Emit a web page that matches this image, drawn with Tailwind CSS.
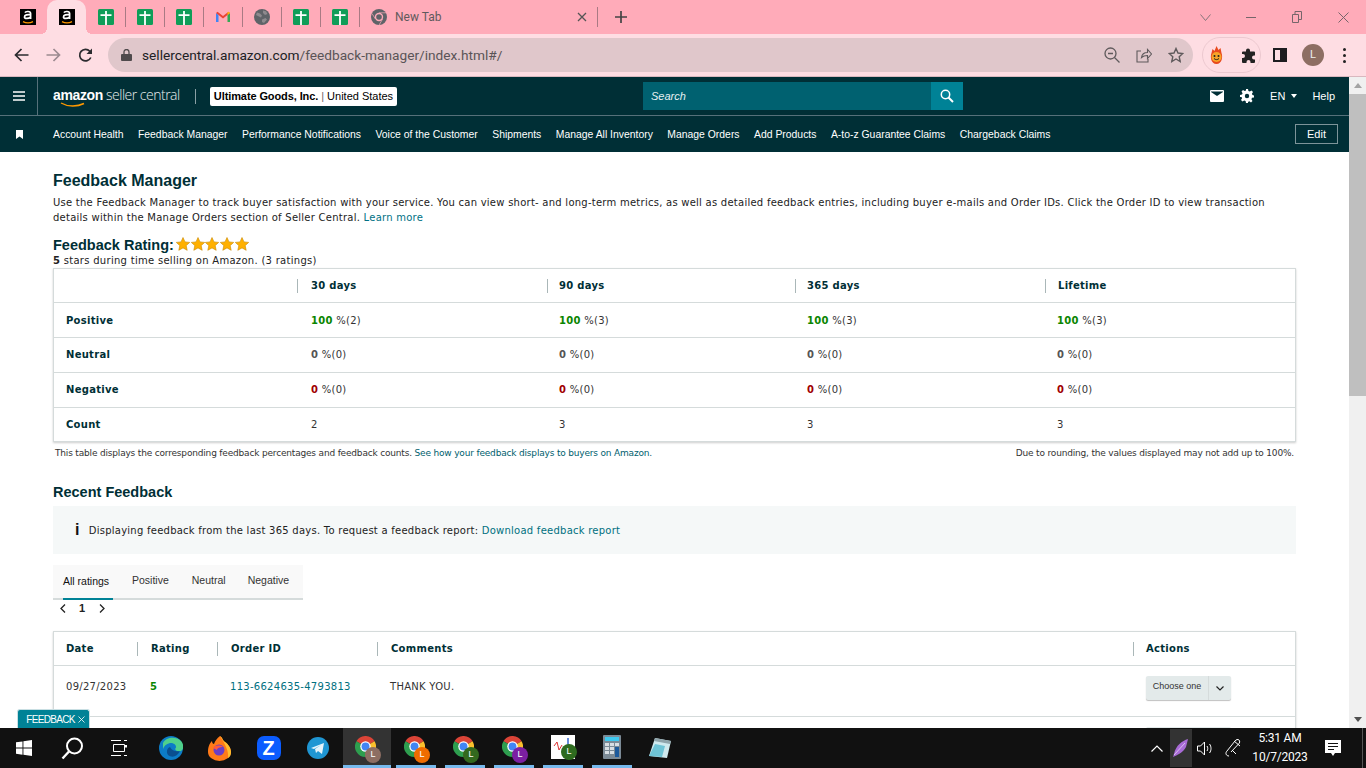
<!DOCTYPE html>
<html lang="en">

<head>
  <meta charset="UTF-8">
  <meta name="viewport" content="width=device-width, initial-scale=1.0">
  <title>Feedback Manager</title>
  <script src="https://cdn.jsdelivr.net/npm/@tailwindcss/browser@4"></script>
</head>

<body class="h-screen w-[1366px] overflow-hidden flex flex-col bg-white font-['Liberation_Sans',sans-serif] text-[#0f1111]">

  <!-- shared icons -->
  <svg class="hidden">
    <symbol id="sheet" viewBox="0 0 16 16">
      <rect width="16" height="16" rx="1.5" fill="#0f9d58" />
      <path d="M7.100 2h1.800v14H7.100zM2.500 5.300h11v1.700h-11z" fill="#fff" />
    </symbol>
    <symbol id="amz" viewBox="0 0 16 16">
      <rect width="16" height="16" fill="#000" />
      <path d="M3 12.600c3 1.600 7 1.600 10 0" stroke="#f90" stroke-width="1.200" fill="none" />
      <path d="M5 3.600c.6-1.400 5.600-1.800 5.600 1v5.400M10.500 5.700c-3-.3-6 .2-6 2.200 0 2 3.800 2 6 .2" stroke="#fff" stroke-width="1.700" fill="none" />
    </symbol>
    <symbol id="chrome" viewBox="0 0 24 24">
      <path d="M12 12L1.600 6A12 12 0 0 1 22.400 6z" fill="#db4437" />
      <path d="M12 12L22.400 6A12 12 0 0 1 12 24z" fill="#fbc02d" />
      <path d="M12 12L12 24A12 12 0 0 1 1.600 6z" fill="#2e9e4f" />
      <circle cx="12" cy="12" r="6" fill="#fff" />
      <circle cx="12" cy="12" r="4.500" fill="#4285f4" />
    </symbol>
  </svg>

  <!-- tab strip -->
  <div class="h-[34px] shrink-0 bg-[#ffabb9] flex items-stretch pl-[8px]">
    <div class="w-[39px] flex items-center justify-center"><svg class="w-4 h-4"><use href="#amz" /></svg></div>
    <div class="w-[39px] relative flex items-center justify-center bg-[#fedde3] rounded-t-[10px]">
      <svg class="w-4 h-4"><use href="#amz" /></svg>
      <span class="absolute -left-[6px] bottom-0 w-[6px] h-[6px] bg-[radial-gradient(circle_at_0_0,transparent_6px,#fedde3_6px)]"></span>
      <span class="absolute -right-[6px] bottom-0 w-[6px] h-[6px] bg-[radial-gradient(circle_at_100%_0,transparent_6px,#fedde3_6px)]"></span>
    </div>
    <div class="w-[39px] flex items-center justify-center"><svg class="w-4 h-4"><use href="#sheet" /></svg><span class="w-px h-[20px] bg-[#a97a84] ml-[11px] -mr-[12px]"></span></div>
    <div class="w-[39px] flex items-center justify-center"><svg class="w-4 h-4"><use href="#sheet" /></svg><span class="w-px h-[20px] bg-[#a97a84] ml-[11px] -mr-[12px]"></span></div>
    <div class="w-[39px] flex items-center justify-center"><svg class="w-4 h-4"><use href="#sheet" /></svg><span class="w-px h-[20px] bg-[#a97a84] ml-[11px] -mr-[12px]"></span></div>
    <div class="w-[39px] flex items-center justify-center">
      <svg class="w-4 h-4" viewBox="0 0 16 16">
        <path d="M1 13V4l2.500 2v7z" fill="#4285f4" />
        <path d="M15 13V4l-2.500 2v7z" fill="#34a853" />
        <path d="M1 4l1.500-1.200L8 7l5.500-4.200L15 4 8 9.500z" fill="#ea4335" />
        <path d="M12.500 6L15 4 13.500 2.800 12.500 3.500z" fill="#fbbc04" />
      </svg>
      <span class="w-px h-[20px] bg-[#a97a84] ml-[11px] -mr-[12px]"></span>
    </div>
    <div class="w-[39px] flex items-center justify-center">
      <svg class="w-4 h-4" viewBox="0 0 16 16">
        <circle cx="8" cy="8" r="8" fill="#5f6368" />
        <path d="M3 3.500l3 1 2 2-1 2-2-1-3-1.500zM9 1.500l3 .8 1.500 2.700-2.500 1-2-2zM8 10.500l3.500-1.500 1.500 1.500-3 3.500-2-1z" fill="#8e8a8e" />
      </svg>
      <span class="w-px h-[20px] bg-[#a97a84] ml-[11px] -mr-[12px]"></span>
    </div>
    <div class="w-[39px] flex items-center justify-center"><svg class="w-4 h-4"><use href="#sheet" /></svg><span class="w-px h-[20px] bg-[#a97a84] ml-[11px] -mr-[12px]"></span></div>
    <div class="w-[39px] flex items-center justify-center"><svg class="w-4 h-4"><use href="#sheet" /></svg><span class="w-px h-[20px] bg-[#a97a84] ml-[11px] -mr-[12px]"></span></div>
    <!-- new tab -->
    <div class="w-[239px] flex items-center pl-[12px]">
      <svg class="w-4 h-4 shrink-0" viewBox="0 0 16 16">
        <circle cx="8" cy="8" r="8" fill="#5f6368" />
        <circle cx="8" cy="8" r="4.200" fill="#ffabb9" />
        <circle cx="8" cy="8" r="2.800" fill="#5f6368" />
        <path d="M8 3.800h7M4.400 10L1 4.500M11.600 10l-3.500 6" stroke="#ffabb9" stroke-width=".7" />
      </svg>
      <span class="ml-[8px] text-[12px] text-[#5f5a5c] font-['Roboto',sans-serif]">New Tab</span>
      <svg class="w-[10px] h-[10px] ml-auto mr-[10px]" viewBox="0 0 10 10"><path d="M1 1l8 8M9 1l-8 8" stroke="#555" stroke-width="1.300" /></svg>
      <span class="w-px h-[20px] bg-[#a97a84]"></span>
    </div>
    <div class="w-[46px] flex items-center justify-center">
      <svg class="w-3 h-3" viewBox="0 0 12 12"><path d="M6 0v12M0 6h12" stroke="#444" stroke-width="1.700" /></svg>
    </div>
    <!-- window controls -->
    <div class="ml-auto flex items-center text-[#76656a]">
      <div class="w-[46px] flex justify-center"><svg class="w-[11px] h-[7px]" viewBox="0 0 11 7"><path d="M.5.500l5 6 5-6" stroke="#86757a" fill="none" /></svg></div>
      <div class="w-[46px] flex justify-center"><svg class="w-[10px] h-px" viewBox="0 0 10 1"><path d="M0 .500h10" stroke="#76656a" /></svg></div>
      <div class="w-[46px] flex justify-center"><svg class="w-[10px] h-[12px]" viewBox="0 0 10 12"><path d="M.5 3.500h6v8h-6zM3 3.500v-3h6.500v8h-3" stroke="#76656a" fill="none" /></svg></div>
      <div class="w-[46px] flex justify-center"><svg class="w-[11px] h-[11px]" viewBox="0 0 11 11"><path d="M.5.500l10 10M10.500.500l-10 10" stroke="#76656a" /></svg></div>
    </div>
  </div>

  <!-- toolbar -->
  <div class="h-[43px] shrink-0 bg-[#fedde3] border-b border-[#d9b8bf] flex items-center">
    <div class="w-[108px] shrink-0 flex items-center pl-[14px] gap-[17px]">
      <svg class="w-[15px] h-[14px]" viewBox="0 0 15 14"><path d="M14.500 7H2M7.500 1L1.500 7l6 6" stroke="#2b2b2f" stroke-width="1.700" fill="none" /></svg>
      <svg class="w-[15px] h-[14px]" viewBox="0 0 15 14"><path d="M.5 7H13M7.500 1l6 6-6 6" stroke="#9c8a90" stroke-width="1.700" fill="none" /></svg>
      <svg class="w-[15px] h-[15px]" viewBox="0 0 15 15"><path d="M12.800 9.500A5.800 5.800 0 1 1 11.800 3.200L13.500 5" stroke="#2b2b2f" stroke-width="1.700" fill="none" /><path d="M14 .5V6H8.500z" fill="#2b2b2f" /></svg>
    </div>
    <div class="w-[1085px] h-[34px] shrink-0 rounded-full bg-[#e0c7cb] flex items-center pl-[13px]">
      <svg class="w-[11px] h-[12px]" viewBox="0 0 11 12"><rect y="5" width="11" height="7" rx="1" fill="#4f4a4c" /><path d="M3 5V3a2.500 2.500 0 0 1 5 0v2" stroke="#4f4a4c" stroke-width="1.300" fill="none" /></svg>
      <span class="ml-[10px] text-[13.700px] text-[#5a5457] font-['Roboto',sans-serif]"><span class="text-[#202124]">sellercentral.amazon.com</span>/feedback-manager/index.html#/</span>
      <div class="ml-auto flex items-center gap-[16px] pr-[9px]">
        <svg class="w-[16px] h-[16px]" viewBox="0 0 16 16"><circle cx="6.500" cy="6.500" r="5.500" stroke="#5f5a5c" stroke-width="1.300" fill="none" /><path d="M10.500 10.500L15.500 15.500M4 6.500h5" stroke="#5f5a5c" stroke-width="1.300" /></svg>
        <svg class="w-[16px] h-[16px]" viewBox="0 0 16 16"><path d="M5.500 10.500c.5-3.500 3-5 6-5V2.500l4 4.500-4 4.500V8.500c-2.500 0-4.500.5-6 2z" stroke="#5f5a5c" stroke-width="1.100" fill="none" /><path d="M5 4H1v11h11v-3" stroke="#5f5a5c" stroke-width="1.100" fill="none" /></svg>
        <svg class="w-[16px] h-[16px]" viewBox="0 0 16 16"><path d="M8 1.500l2 4.500 4.800.5-3.600 3.200 1 4.800L8 12l-4.200 2.500 1-4.800L1.200 6.500 6 6z" stroke="#5f5a5c" stroke-width="1.400" fill="none" /></svg>
      </div>
    </div>
    <div class="ml-[9px] w-[59px] h-[36px] rounded-full border border-[#ecc9d0] flex items-center pl-[6px] gap-[17px]">
      <svg class="w-[15px] h-[18px]" viewBox="0 0 15 18"><path d="M7.500 0l2 4 2-2 1 5c1.500 4 .5 11-5 11s-6.500-7-5-11l1-4 2 2z" fill="#e8491d" /><circle cx="7.500" cy="11" r="5" fill="#f7a428" /><circle cx="5.500" cy="10" r="1" fill="#222" /><circle cx="9.500" cy="10" r="1" fill="#222" /><path d="M5 12.500c1.500 1.500 3.500 1.500 5 0" stroke="#222" fill="none" /></svg>
      <svg class="w-[15px] h-[15px]" viewBox="0 0 15 15"><path d="M5 2.500a2 2 0 0 1 4 0V3.500h4a1 1 0 0 1 1 1v3h-1a2 2 0 0 0 0 4h1V14a1 1 0 0 1-1 1H9.500v-1a2 2 0 0 0-4 0v1H2a1 1 0 0 1-1-1V10h1a2 2 0 0 0 0-4H1V4.500a1 1 0 0 1 1-1h3z" fill="#222" /></svg>
    </div>
    <svg class="ml-[12px] w-[14px] h-[14px]" viewBox="0 0 14 14"><path fill-rule="evenodd" d="M0 0h14v14H0zM2 2v10h5V2z" fill="#1d1d20" /></svg>
    <div class="ml-[15px] w-[22px] h-[22px] rounded-full bg-[#8d6e63] flex items-center justify-center text-[11px] text-[#eee] font-['Roboto',sans-serif]">L</div>
    <div class="ml-[19px] flex flex-col gap-[3px]">
      <span class="w-[3px] h-[3px] rounded-full bg-[#222]"></span>
      <span class="w-[3px] h-[3px] rounded-full bg-[#222]"></span>
      <span class="w-[3px] h-[3px] rounded-full bg-[#222]"></span>
    </div>
  </div>

  <!-- page + scrollbar -->
  <div class="flex-1 min-h-0 flex">
    <div class="w-[1349px] relative overflow-hidden flex flex-col">

      <!-- seller central header -->
      <header class="h-[39px] shrink-0 bg-[#002f36] border-b border-[#56717a] flex items-stretch text-white">
        <div class="w-[38px] border-r border-[#56717a] flex items-center justify-center">
          <svg class="w-3 h-[10px]" viewBox="0 0 12 10"><path d="M0 1h12M0 5h12M0 9h12" stroke="#fff" stroke-width="1.500" /></svg>
        </div>
        <div class="w-[142px] ml-[15px] relative flex items-center pb-[2px] text-[14px] leading-none tracking-[-0.35px]">
          <span class="font-bold">amazon</span><span class="ml-[3px] font-['Open_Sans',sans-serif] font-light tracking-[-0.5px] text-[#e6ecec]">seller central</span>
          <svg class="absolute left-[7px] top-[25px] w-[26px] h-[6px]" viewBox="0 0 26 6"><path d="M1 1c7 4 16 4 23 .5" stroke="#f90" stroke-width="1.400" fill="none" /></svg>
        </div>
        <div class="flex items-center"><span class="w-px h-[15px] bg-[#8aa0a5]"></span></div>
        <div class="flex items-center ml-[14px]">
          <div class="w-[187px] h-[19px] bg-white rounded-[2px] flex items-center justify-center text-[11px] text-black whitespace-nowrap">
            <span class="font-bold tracking-[-0.1px]">Ultimate Goods, Inc.</span><span class="mx-[3px] text-[#666]">|</span><span>United States</span>
          </div>
        </div>
        <div class="flex items-center ml-[246px]">
          <div class="w-[288px] h-[28px] bg-[#006170] flex items-center pl-[8px] text-[11px] italic text-[#e6f0f2]">Search</div>
          <div class="w-[32px] h-[28px] bg-[#008296] flex items-center justify-center">
            <svg class="w-[14px] h-[14px]" viewBox="0 0 14 14"><circle cx="5.500" cy="5.500" r="4.200" stroke="#fff" stroke-width="1.500" fill="none" /><path d="M8.500 8.500L13 13" stroke="#fff" stroke-width="2" /></svg>
          </div>
        </div>
        <div class="ml-auto flex items-center pr-[14px]">
          <svg class="w-[14px] h-[12px]" viewBox="0 0 14 12"><path fill-rule="evenodd" d="M1 0h12a1 1 0 0 1 1 1v10a1 1 0 0 1-1 1H1a1 1 0 0 1-1-1V1a1 1 0 0 1 1-1zm0 2l6 4 6-4v-.5H1z" fill="#fff" /></svg>
          <svg class="ml-[16px] w-[14px] h-[14px]" viewBox="0 0 14 14"><path fill-rule="evenodd" d="M6 0h2l.4 2 1.400.6L11.500 1.500 13 3l-1.100 1.700.6 1.300 1.500.4v2l-2 .4-.6 1.400 1.100 1.700-1.500 1.500-1.700-1.100-1.300.6L8 14H6l-.4-2-1.400-.6-1.700 1.100L1 11l1.100-1.700-.6-1.300L0 8V6l2-.4.6-1.400L1.500 2.500 3 1l1.700 1.100L6 1.500zM7 4.800a2.200 2.200 0 1 0 0 4.400 2.200 2.200 0 0 0 0-4.400z" fill="#fff" /></svg>
          <span class="ml-[16px] text-[11px]">EN</span>
          <span class="ml-[6px] w-0 h-0 border-x-[3.500px] border-x-transparent border-t-[4px] border-t-white"></span>
          <span class="ml-[15px] text-[11px]">Help</span>
        </div>
      </header>

      <!-- nav -->
      <nav class="h-[36px] shrink-0 bg-[#002f36] flex items-center text-white text-[10.400px] whitespace-nowrap">
        <div class="w-[53px] flex justify-center pr-[14px]">
          <svg class="w-[7px] h-[9px]" viewBox="0 0 7 9"><path d="M0 0h7v9L3.500 6.500 0 9z" fill="#fff" /></svg>
        </div>
        <div class="flex gap-[14.500px] mt-[2px]">
          <span>Account Health</span>
          <span>Feedback Manager</span>
          <span>Performance Notifications</span>
          <span>Voice of the Customer</span>
          <span>Shipments</span>
          <span>Manage All Inventory</span>
          <span>Manage Orders</span>
          <span>Add Products</span>
          <span>A-to-z Guarantee Claims</span>
          <span>Chargeback Claims</span>
        </div>
        <div class="ml-auto mr-[11px] w-[43px] h-[20px] border border-[#7d9499] flex items-center justify-center text-[11px]">Edit</div>
      </nav>

      <!-- content -->
      <main class="flex-1 min-h-0 overflow-hidden pl-[53px] pr-[53px] text-[#111]">
        <h1 class="mt-[19px] text-[16px] leading-[19px] font-bold text-[#002f36]">Feedback Manager</h1>
        <p class="mt-[5px] text-[10px] leading-[15px] tracking-[0.25px] font-['DejaVu_Sans',sans-serif] text-[#222] w-[1230px]">Use the Feedback Manager to track buyer satisfaction with your service. You can view short- and long-term metrics, as well as detailed feedback entries, including buyer e-mails and Order IDs. Click the Order ID to view transaction details within the Manage Orders section of Seller Central. <span class="text-[#007185]">Learn more</span></p>

        <div class="mt-[12px] h-[16px] flex items-center text-[14.500px] font-bold text-[#002f36]">
          <span class="mt-[2px]">Feedback Rating:</span>
          <span class="ml-[2px] flex -mt-[3px] gap-[0.7px]">
            <svg class="w-[14px] h-[14px]" viewBox="0 0 14 14"><path d="M7 .5l2 4.400 4.700.5-3.500 3.200 1 4.700L7 10.900l-4.200 2.400 1-4.700L.3 5.400 5 4.900z" fill="#ffb000" stroke="#c98a00" stroke-width=".6" /></svg>
            <svg class="w-[14px] h-[14px]" viewBox="0 0 14 14"><path d="M7 .5l2 4.400 4.700.5-3.500 3.200 1 4.700L7 10.900l-4.200 2.400 1-4.700L.3 5.400 5 4.900z" fill="#ffb000" stroke="#c98a00" stroke-width=".6" /></svg>
            <svg class="w-[14px] h-[14px]" viewBox="0 0 14 14"><path d="M7 .5l2 4.400 4.700.5-3.500 3.200 1 4.700L7 10.900l-4.200 2.400 1-4.700L.3 5.400 5 4.900z" fill="#ffb000" stroke="#c98a00" stroke-width=".6" /></svg>
            <svg class="w-[14px] h-[14px]" viewBox="0 0 14 14"><path d="M7 .5l2 4.400 4.700.5-3.500 3.200 1 4.700L7 10.900l-4.200 2.400 1-4.700L.3 5.400 5 4.900z" fill="#ffb000" stroke="#c98a00" stroke-width=".6" /></svg>
            <svg class="w-[14px] h-[14px]" viewBox="0 0 14 14"><path d="M7 .5l2 4.400 4.700.5-3.500 3.200 1 4.700L7 10.900l-4.200 2.400 1-4.700L.3 5.400 5 4.900z" fill="#ffb000" stroke="#c98a00" stroke-width=".6" /></svg>
          </span>
        </div>
        <p class="h-[15px] leading-[16px] text-[10px] tracking-[0.29px] font-['DejaVu_Sans',sans-serif] text-[#222]"><b>5</b> stars during time selling on Amazon. (3 ratings)</p>

        <!-- summary table -->
        <div class="h-[174px] border border-[#d5dbdb] shadow-[0_1px_2px_rgba(0,0,0,0.2)] text-[10px] tracking-[0.28px] font-['DejaVu_Sans',sans-serif]">
          <div class="h-[34px] grid grid-cols-[243px_250px_248px_250px_1fr] items-center border-b border-[#d5dbdb] font-bold text-[#002f36]">
            <span></span>
            <span class="pl-[13px] h-[14px] leading-[14px] border-l border-[#aab7b8]">30 days</span>
            <span class="pl-[11px] h-[14px] leading-[14px] border-l border-[#aab7b8]">90 days</span>
            <span class="pl-[11px] h-[14px] leading-[14px] border-l border-[#aab7b8]">365 days</span>
            <span class="pl-[12px] h-[14px] leading-[14px] border-l border-[#aab7b8]">Lifetime</span>
          </div>
          <div class="h-[35px] grid grid-cols-[243px_250px_248px_250px_1fr] items-center border-b border-[#d5dbdb] text-[#333]">
            <b class="pl-[12px] text-[#002f36]">Positive</b>
            <span class="pl-[14px]"><b class="text-[#0a8500]">100</b> %(2)</span>
            <span class="pl-[12px]"><b class="text-[#0a8500]">100</b> %(3)</span>
            <span class="pl-[12px]"><b class="text-[#0a8500]">100</b> %(3)</span>
            <span class="pl-[12px]"><b class="text-[#0a8500]">100</b> %(3)</span>
          </div>
          <div class="h-[35px] pb-[2px] grid grid-cols-[243px_250px_248px_250px_1fr] items-center border-b border-[#d5dbdb] text-[#333]">
            <b class="pl-[12px] text-[#002f36]">Neutral</b>
            <span class="pl-[14px]"><b class="text-[#555]">0</b> %(0)</span>
            <span class="pl-[12px]"><b class="text-[#555]">0</b> %(0)</span>
            <span class="pl-[12px]"><b class="text-[#555]">0</b> %(0)</span>
            <span class="pl-[12px]"><b class="text-[#555]">0</b> %(0)</span>
          </div>
          <div class="h-[35px] pb-[2px] grid grid-cols-[243px_250px_248px_250px_1fr] items-center border-b border-[#d5dbdb] text-[#333]">
            <b class="pl-[12px] text-[#002f36]">Negative</b>
            <span class="pl-[14px]"><b class="text-[#a00000]">0</b> %(0)</span>
            <span class="pl-[12px]"><b class="text-[#a00000]">0</b> %(0)</span>
            <span class="pl-[12px]"><b class="text-[#a00000]">0</b> %(0)</span>
            <span class="pl-[12px]"><b class="text-[#a00000]">0</b> %(0)</span>
          </div>
          <div class="h-[33px] grid grid-cols-[243px_250px_248px_250px_1fr] items-center text-[#333]">
            <b class="pl-[12px] text-[#002f36]">Count</b>
            <span class="pl-[14px]">2</span>
            <span class="pl-[12px]">3</span>
            <span class="pl-[12px]">3</span>
            <span class="pl-[12px]">3</span>
          </div>
        </div>
        <div class="mt-[5px] h-[12px] flex justify-between px-[2px] text-[9px] leading-[12px] font-['DejaVu_Sans',sans-serif] tracking-[-0.18px] text-[#333]">
          <span>This table displays the corresponding feedback percentages and feedback counts. <span class="text-[#00606e]">See how your feedback displays to buyers on Amazon.</span></span>
          <span>Due to rounding, the values displayed may not add up to 100%.</span>
        </div>

        <h2 class="mt-[25px] h-[20px] text-[14.500px] leading-[17px] font-bold text-[#002f36]">Recent Feedback</h2>
        <div class="mt-[2px] h-[48px] bg-[#f5f8f8] flex items-center pl-[22px] text-[10px] tracking-[0.25px] font-['DejaVu_Sans',sans-serif] text-[#222]">
          <span class="font-bold text-[16px] leading-none text-[#111] font-['Liberation_Sans',sans-serif]">i</span>
          <span class="ml-[9px]">Displaying feedback from the last 365 days. To request a feedback report: <span class="text-[#00707f]">Download feedback report</span></span>
        </div>

        <div class="mt-[11px] w-[250px] h-[35px] pb-[1px] bg-[#f9f9f9] border-b-2 border-[#d5dbdb] flex items-stretch text-[10.500px] text-[#333]">
          <span class="ml-[10px] w-[50px] border-b-2 border-[#008296] -mb-[3px] flex items-center text-[#111]">All ratings</span>
          <span class="ml-[19px] flex items-center">Positive</span>
          <span class="ml-[23px] flex items-center">Neutral</span>
          <span class="ml-[22px] flex items-center">Negative</span>
        </div>
        <div class="h-[16px] flex items-center text-[11px] font-bold text-[#222]">
          <svg class="ml-[7px] w-[6px] h-[9px]" viewBox="0 0 6 9"><path d="M5 .5L1 4.500l4 4" stroke="#222" stroke-width="1.300" fill="none" /></svg>
          <span class="ml-[13px]">1</span>
          <svg class="ml-[14px] w-[6px] h-[9px]" viewBox="0 0 6 9"><path d="M1 .5l4 4-4 4" stroke="#222" stroke-width="1.300" fill="none" /></svg>
        </div>

        <!-- feedback list -->
        <div class="mt-[15px] border border-[#d5dbdb] shadow-[0_1px_2px_rgba(0,0,0,0.2)] text-[10px] tracking-[0.28px] font-['DejaVu_Sans',sans-serif]">
          <div class="h-[34px] grid grid-cols-[83px_80px_160px_756px_1fr] items-center border-b border-[#d5dbdb] font-bold text-[#002f36]">
            <span class="pl-[12px]">Date</span>
            <span class="pl-[13px] h-[14px] leading-[14px] border-l border-[#aab7b8]">Rating</span>
            <span class="pl-[13px] h-[14px] leading-[14px] border-l border-[#aab7b8]">Order ID</span>
            <span class="pl-[13px] h-[14px] leading-[14px] border-l border-[#aab7b8]">Comments</span>
            <span class="pl-[12px] h-[14px] leading-[14px] border-l border-[#aab7b8]">Actions</span>
          </div>
          <div class="h-[51px] grid grid-cols-[83px_80px_160px_756px_1fr] items-center border-b border-[#d5dbdb] text-[#333]">
            <span class="pl-[12px] -mt-[10px]">09/27/2023</span>
            <b class="pl-[13px] -mt-[10px] text-[#0a8500]">5</b>
            <span class="pl-[13px] -mt-[10px] text-[#00707f]">113-6624635-4793813</span>
            <span class="pl-[13px] -mt-[10px]">THANK YOU.</span>
            <div class="pl-[13px] -mt-[6px]">
              <div class="w-[85px] h-[24px] bg-[#e3eaea] rounded-[2px] shadow-[0_1px_1px_rgba(0,0,0,0.25)] flex items-center font-['Liberation_Sans',sans-serif] tracking-normal text-[9px] text-[#333]">
                <span class="w-[63px] h-full border-r border-[#d5dbdb] flex items-center justify-center pb-[2px]">Choose one</span>
                <svg class="ml-[7px] w-[8px] h-[5px]" viewBox="0 0 8 5"><path d="M.5.500L4 4 7.500.500" stroke="#222" stroke-width="1.200" fill="none" /></svg>
              </div>
            </div>
          </div>
          <div class="h-[51px] grid grid-cols-[83px_80px_160px_756px_1fr] items-start pt-[10px]">
            <span></span><span></span><span></span><span></span>
            <div class="pl-[13px]"><div class="w-[85px] h-[24px] bg-[#e3eaea] rounded-[2px]"></div></div>
          </div>
        </div>
      </main>

      <!-- floating feedback tab -->
      <div class="absolute left-[17px] bottom-0 w-[73px] h-[19px] bg-[#008296] border-t border-x border-[#c9dfe3] rounded-t-[3px] flex items-center justify-center text-[10px] text-white tracking-[-0.7px]">
        <span class="ml-[4px]">FEEDBACK</span>
        <svg class="ml-[3px] w-[7px] h-[7px]" viewBox="0 0 7 7"><path d="M.5.500l6 6M6.500.500l-6 6" stroke="#fff" stroke-width=".8" /></svg>
      </div>
    </div>

    <!-- scrollbar -->
    <div class="w-[17px] bg-[#f0f0f0] flex flex-col items-center">
      <span class="mt-[6px] w-0 h-0 border-x-[4px] border-x-transparent border-b-[5px] border-b-[#a3a3a3]"></span>
      <div class="mt-[6px] w-full h-[302px] bg-[#bfbfbf]"></div>
      <span class="mt-auto mb-[6px] w-0 h-0 border-x-[4px] border-x-transparent border-t-[5px] border-t-[#505050]"></span>
    </div>
  </div>

  <!-- windows taskbar -->
  <footer class="h-[40px] shrink-0 bg-[#111] flex items-stretch text-white">
    <div class="w-[48px] flex items-center justify-center">
      <svg class="w-4 h-4" viewBox="0 0 16 16"><path d="M0 2.300l6.500-.9v6.200H0zM7.400 1.300L16 0v7.600H7.400zM0 8.500h6.500v6.200L0 13.800zM7.400 8.500H16V16l-8.600-1.200z" fill="#fff" /></svg>
    </div>
    <div class="w-[48px] flex items-center justify-center">
      <svg class="w-[23px] h-[23px]" viewBox="0 0 23 23"><circle cx="13.500" cy="9" r="7.500" stroke="#fff" stroke-width="2" fill="none" /><path d="M8 14.500L1.500 21.500" stroke="#fff" stroke-width="2.400" /></svg>
    </div>
    <div class="w-[46px] flex items-center justify-center">
      <svg class="w-4 h-[16px]" viewBox="0 0 16 16"><path d="M0 .5h10M0 15.500h10M2.500 4.500h11v7h-11zM13 .5h3M13 15.500h3" stroke="#fff" fill="none" /><rect x="13.500" y="5" width="2.500" height="2.500" fill="#fff" /></svg>
    </div>
    <!-- pinned apps -->
    <div class="w-[48px] ml-[5px] flex items-center justify-center">
      <svg class="w-6 h-6" viewBox="0 0 24 24"><circle cx="12" cy="12" r="12" fill="#0c7cc7" /><path d="M4 7c3-6 13-7 18-2 2 2 2.500 5 2 7.500-1 3-5 3.500-7 2-1-.8-1-2 0-3 .5-3-3-5-6-4.500C7 8 5 10 4 13z" fill="#4fd18c" /><path d="M9 19c-2-3-1-7 2-8 2 4 6 5 10 4-3 6-8 7-12 4z" fill="#0a4f8f" /></svg>
    </div>
    <div class="w-[49px] flex items-center justify-center">
      <svg class="w-[23px] h-[25px]" viewBox="0 0 23 25"><path d="M12 0c3 2 2 4 5 6 3 2 6 6 6 10a11.500 9 0 0 1-23 0C0 10 2 7 4 5c0 2 1 3 2 3 1-3 3-6 6-8z" fill="#ff7a18" /><path d="M12 0c3 2 2 4 5 6 3 2 6 6 6 10 0 3-1 5-3 6 1-7-3-14-8-22z" fill="#ffbd2e" /><circle cx="11" cy="14" r="5.500" fill="#6b3fc4" /><path d="M5 12c2-3 7-3 10-1-3 0-6 1-6 3z" fill="#ff5a3c" /></svg>
    </div>
    <div class="w-[49px] flex items-center justify-center">
      <div class="w-6 h-6 rounded-[7px] bg-[#0b5cff] flex items-center justify-center text-[20px] font-bold leading-none">Z</div>
    </div>
    <div class="w-[50px] flex items-center justify-center">
      <svg class="w-[22px] h-[22px]" viewBox="0 0 22 22"><circle cx="11" cy="11" r="11" fill="#1f96d3" /><path d="M4 11l13-5-2 11-4-3-2 2-1-4 6-4-7 4z" fill="#e6f4fb" /></svg>
    </div>
    <div class="w-[48px] bg-[#333] border-b-[3px] border-[#76b9ed] flex items-center justify-center">
      <div class="relative w-[21px] h-[21px] -ml-[3px]"><svg class="w-[21px] h-[21px]"><use href="#chrome" /></svg><span class="absolute left-[10px] top-[11px] w-[16px] h-[16px] rounded-full bg-[#8d6e63] flex items-center justify-center text-[9px]">L</span></div>
    </div>
    <div class="w-[40px] ml-[5px] border-b-[3px] border-[#76b9ed] flex items-center justify-center">
      <div class="relative w-[21px] h-[21px] -ml-[3px]"><svg class="w-[21px] h-[21px]"><use href="#chrome" /></svg><span class="absolute left-[10px] top-[11px] w-[16px] h-[16px] rounded-full bg-[#ef6c00] flex items-center justify-center text-[9px]">L</span></div>
    </div>
    <div class="w-[40px] ml-[9px] border-b-[3px] border-[#76b9ed] flex items-center justify-center">
      <div class="relative w-[21px] h-[21px] -ml-[3px]"><svg class="w-[21px] h-[21px]"><use href="#chrome" /></svg><span class="absolute left-[10px] top-[11px] w-[16px] h-[16px] rounded-full bg-[#33691e] flex items-center justify-center text-[9px]">L</span></div>
    </div>
    <div class="w-[40px] ml-[9px] border-b-[3px] border-[#76b9ed] flex items-center justify-center">
      <div class="relative w-[21px] h-[21px] -ml-[3px]"><svg class="w-[21px] h-[21px]"><use href="#chrome" /></svg><span class="absolute left-[10px] top-[11px] w-[16px] h-[16px] rounded-full bg-[#7b1fa2] flex items-center justify-center text-[9px]">L</span></div>
    </div>
    <div class="w-[40px] ml-[9px] border-b-[3px] border-[#76b9ed] flex items-center justify-center">
      <div class="relative w-6 h-6 bg-white">
        <svg class="w-6 h-6" viewBox="0 0 24 24"><path d="M3 11l3-4 2 8 3-5" stroke="#d33" fill="none" /><path d="M17 3v8" stroke="#36c" stroke-width="1.500" /></svg>
        <span class="absolute left-[10px] top-[9px] w-[16px] h-[16px] rounded-full bg-[#2e6b1f] flex items-center justify-center text-[9px]">L</span>
      </div>
    </div>
    <div class="w-[40px] ml-[9px] border-b-[3px] border-[#76b9ed] flex items-center justify-center">
      <svg class="w-[18px] h-[24px]" viewBox="0 0 18 24"><rect width="18" height="24" rx="1" fill="#7b8a96" /><rect x="2" y="2" width="14" height="4" fill="#3fc9ef" /><path d="M2 8h4v3H2zM7 8h4v3H7zM2 12h4v3H2zM7 12h4v3H7zM2 16h4v3H2zM7 16h4v3H7z" fill="#d7dee3" /><path d="M12 8h4v3h-4z" fill="#d7dee3" /><rect x="12" y="12" width="4" height="10" fill="#1c5a9c" /></svg>
    </div>
    <div class="w-[40px] ml-[8px] flex items-center justify-center">
      <svg class="w-[22px] h-[24px]" viewBox="0 0 22 24"><path d="M6 2l16 3-4 17L0 20z" fill="#cfe9ee" /><path d="M6 2l16 3-1 3L5 5z" fill="#8fa4ab" /><path d="M0 20l6-12 10 2-3 11z" fill="#6fc4d6" /></svg>
    </div>
    <!-- tray -->
    <div class="ml-auto flex items-stretch">
      <div class="w-[26px] flex items-center justify-center">
        <svg class="w-[12px] h-[7px]" viewBox="0 0 12 7"><path d="M.5 6.500L6 1l5.500 5.500" stroke="#fff" stroke-width="1.200" fill="none" /></svg>
      </div>
      <div class="w-[22px] bg-[#333] mt-[1px] mb-[1px] flex items-center justify-center">
        <svg class="w-[16px] h-[18px]" viewBox="0 0 16 18"><path d="M15 0C9 2 3 6 1 15l-1 3c4-2 10-4 13-10z" fill="#a86bd6" /><path d="M12 4L1 16" stroke="#e6d3f5" stroke-width=".8" /></svg>
      </div>
      <div class="w-[26px] flex items-center justify-center">
        <svg class="w-[17px] h-[15px]" viewBox="0 0 17 15"><path d="M.5 5h3l4-4v13l-4-4h-3z" stroke="#fff" fill="none" /><path d="M10 5c1 1.500 1 3.500 0 5M12.500 3c2 2.500 2 6.500 0 9" stroke="#fff" fill="none" /></svg>
      </div>
      <div class="w-[24px] ml-[3px] flex items-center justify-center">
        <svg class="w-[17px] h-[18px]" viewBox="0 0 17 18"><path d="M4 17c-3 0-4-3-2-5l8-10c1-1.500 3-2 4-1s1 3-.5 4L6 13M9 2l6 5M7 11l4 4" stroke="#fff" fill="none" /></svg>
      </div>
      <div class="w-[70px] flex flex-col items-center justify-center text-[12px] leading-[19px] tracking-[-0.2px] font-['Roboto',sans-serif]">
        <span>5:31 AM</span>
        <span>10/7/2023</span>
      </div>
      <div class="w-[28px] ml-[4px] flex items-center justify-center">
        <svg class="w-4 h-[16px]" viewBox="0 0 16 16"><path d="M0 0h16v13h-6l-2 3-2-3H0z" fill="#fff" /><path d="M3 3.500h10M3 6.500h10M3 9.500h6" stroke="#111" /></svg>
      </div>
      <div class="w-[4px] ml-[15px] border-l border-[#555]"></div>
    </div>
  </footer>

</body>

</html>
